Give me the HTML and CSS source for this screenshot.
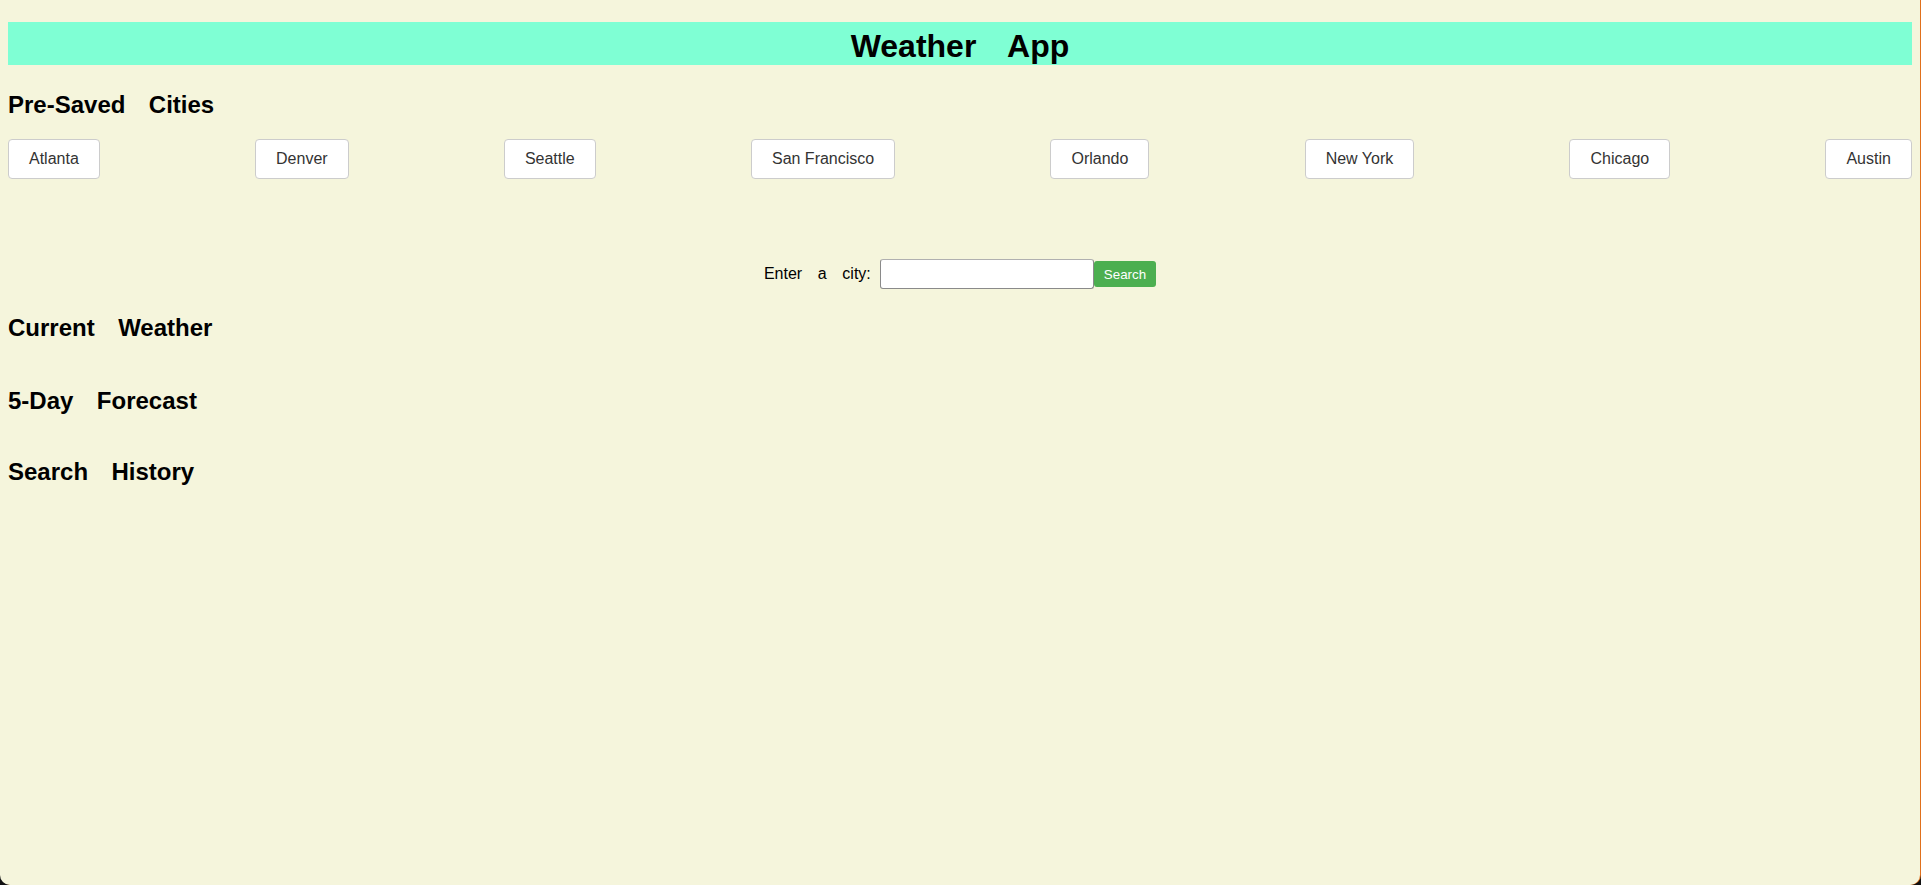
FILE: index.html
```html
<!DOCTYPE html>
<html lang="en">
<head>
<meta charset="utf-8">
<title>Weather App</title>
<link rel="stylesheet" href="styles.css">
</head>
<body>
  <h1 class="title">Weather App</h1>
  <h2 class="heading heading-presaved">Pre-Saved Cities</h2>
  <div class="cities">
    <button class="city">Atlanta</button>
    <button class="city">Denver</button>
    <button class="city">Seattle</button>
    <button class="city">San Francisco</button>
    <button class="city">Orlando</button>
    <button class="city">New York</button>
    <button class="city">Chicago</button>
    <button class="city">Austin</button>
  </div>
  <form class="search-form">
    <label class="search-label" for="city">Enter a city:</label>
    <input class="search-input" id="city" type="text">
    <button class="search-btn" type="button">Search</button>
  </form>
  <h2 class="heading heading-current">Current Weather</h2>
  <div class="current"></div>
  <h2 class="heading heading-forecast">5-Day Forecast</h2>
  <div class="forecast"></div>
  <h2 class="heading heading-history">Search History</h2>
  <div class="history"></div>
</body>
</html>
```
FILE: styles.css
```css
html {
  background: #111;
}
body {
  margin: 0;
  width: 1920px;
  min-height: 885px;
  box-sizing: border-box;
  padding: 22px 8px 0;
  background: #f5f5dc;
  border-radius: 0 0 10px 10px;
  box-shadow: 1px 0 0 #e0701c;
  font-family: "Liberation Sans", Arial, Helvetica, sans-serif;
  font-size: 16px;
  color: #000;
}
.title {
  margin: 0;
  padding: 6px 0 0;
  height: 43px;
  box-sizing: border-box;
  line-height: 37px;
  font-size: 32px;
  font-weight: bold;
  text-align: center;
  background: #7fffd4;
  word-spacing: 0.72em;
}
.heading {
  margin: 0;
  font-size: 24px;
  line-height: 28px;
  font-weight: bold;
  word-spacing: 0.7em;
}
.heading-presaved { margin-top: 26px; }
.cities {
  display: flex;
  justify-content: space-between;
  margin-top: 20px;
}
.city {
  font-family: "Liberation Sans", Arial, Helvetica, sans-serif;
  font-size: 16px;
  line-height: 18px;
  padding: 10px 20px;
  border: 1px solid #ccc;
  border-radius: 4px;
  background: #fff;
  color: #333;
}
.search-form {
  display: flex;
  justify-content: center;
  align-items: center;
  margin-top: 80px;
  height: 30px;
}
.search-label {
  margin-right: 9px;
  word-spacing: 0.7em;
}
.search-input {
  width: 214px;
  height: 30px;
  box-sizing: border-box;
  border: 1px solid #8a8a8a;
  border-top-color: #b0b0b0;
  border-radius: 3px;
  background: #fff;
  margin: 0;
}
.search-btn {
  height: 26px;
  padding: 0 10px;
  border: none;
  border-radius: 3px;
  background: #4caf50;
  color: #fff;
  font-family: "Liberation Sans", Arial, Helvetica, sans-serif;
  font-size: 13.33px;
}
.heading-current { margin-top: 25px; }
.heading-forecast { margin-top: 45px; }
.heading-history { margin-top: 43px; }
```
